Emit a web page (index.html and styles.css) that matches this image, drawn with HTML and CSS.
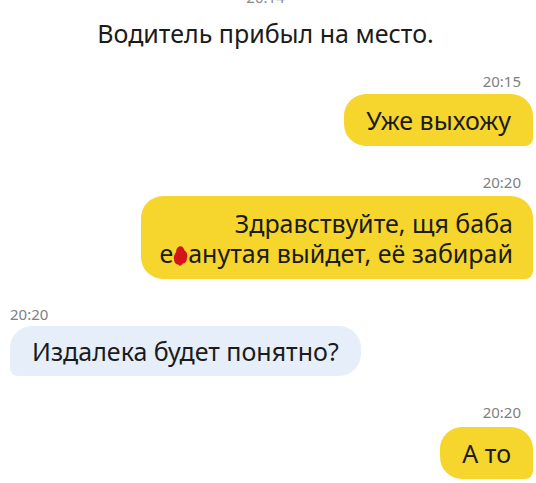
FILE: index.html
```html
<!DOCTYPE html>
<html>
	<head>
		<meta charset="utf-8">
		<title>Чат с водителем</title>
		<link rel="stylesheet" href="styles.css">
	</head>
	<body>
		<div class="Chat">
			<div class="TimeCenter">20:14</div>
			<div class="SystemText">Водитель прибыл на место.</div>

			<div class="TimeRight t1">20:15</div>
			<div class="BubbleOut b1">Уже выхожу</div>

			<div class="TimeRight t2">20:20</div>
			<div class="BubbleOut b2">
				Здравствуйте, щя баба<br>е<svg class="Blot" width="15" height="22" viewBox="0 0 14 20"><path d="M7 1 C9 1 10 3 11 5 C13 6 14 9 13 12 C13 15 11 17 9 17 C8 19 6 20 5 18 C3 18 1 16 1 13 C0 10 2 8 3 6 C3 3 5 1 7 1 Z" fill="#d3151b"/></svg>анутая выйдет, её забирай
			</div>

			<div class="TimeLeft">20:20</div>
			<div class="BubbleIn">Издалека будет понятно?</div>

			<div class="TimeRight t3">20:20</div>
			<div class="BubbleOut b4">А то</div>
		</div>
	</body>
</html>
```

FILE: styles.css
```css
body {
	margin: 0;
	background-color: #ffffff;
	font-family: "Noto Sans", "Open Sans", sans-serif;
	color: #1b1b1b;
	overflow: hidden;
	}

.Chat{
	display: flex;
	flex-direction: column;
	padding: 0 3px 0 10px;
	}

.TimeCenter{
	align-self: center;
	margin-top: -12px;
	margin-right: 12px;
	font-size: 15px;
	line-height: 18px;
	color: #8a8a8a;
	}

.SystemText{
	align-self: center;
	margin-top: 10px;
	margin-right: 12px;
	font-size: 25px;
	line-height: 34px;
	}

.TimeRight{
	align-self: flex-end;
	margin-right: 12px;
	font-size: 15px;
	line-height: 18px;
	color: #808080;
	}

.TimeLeft{
	align-self: flex-start;
	margin-top: 26px;
	font-size: 15px;
	line-height: 18px;
	color: #808080;
	}

.t1{ margin-top: 22px; }
.t2{ margin-top: 27px; }
.t3{ margin-top: 27px; }

.BubbleOut{
	align-self: flex-end;
	margin-top: 4px;
	background-color: #f6d52c;
	border-radius: 22px 22px 8px 22px;
	font-size: 25px;
	line-height: 30px;
	padding: 11px 22px 11px 22px;
	text-align: right;
	}

.b2{
	margin-top: 5px;
	padding: 12px 20px 11px 18px;
	}

.b4{
	margin-top: 6px;
	}

.BubbleIn{
	align-self: flex-start;
	margin-top: 3px;
	background-color: #e6eff9;
	border-radius: 22px 22px 22px 8px;
	font-size: 25px;
	line-height: 30px;
	padding: 10px 22px 10px 22px;
	}

.Blot{
	vertical-align: -4px;
	}
```
